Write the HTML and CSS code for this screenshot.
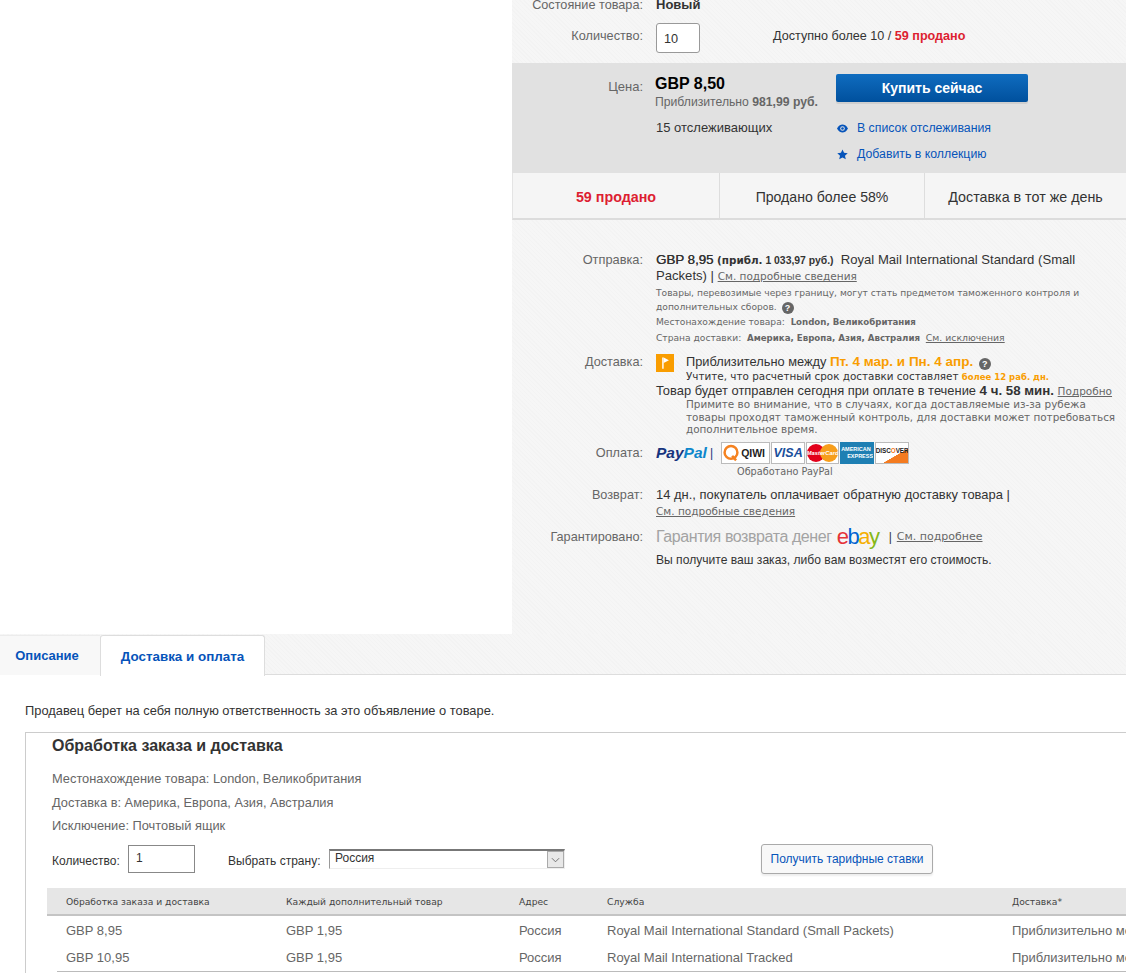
FILE: index.html
```html
<!DOCTYPE html>
<html lang="ru">
<head>
<meta charset="utf-8">
<title>Доставка и оплата</title>
<link rel="stylesheet" href="styles.css">
</head>
<body>
<div class="page">
  <section class="panel">
    <div class="row row-cond"><div class="lbl">Состояние товара:</div><div class="val strong">Новый</div></div>
    <div class="row row-qty">
      <div class="lbl">Количество:</div>
      <div class="qty-box">10</div>
      <div class="avail">Доступно более 10 / <b class="red">59 продано</b></div>
    </div>
    <div class="band">
      <div class="lbl band-lbl">Цена:</div>
      <div class="band-c1">
        <div class="price">GBP 8,50</div>
        <div class="approx">Приблизительно <b>981,99 руб.</b></div>
        <div class="watchers">15 отслеживающих</div>
      </div>
      <div class="band-c2">
        <div class="buy">Купить сейчас</div>
        <div class="act act-a">
          <svg class="act-i" viewBox="0 0 12 10"><path d="M0 5C2 1.6 4 .6 6 .6s4 1 6 4.400c-2 3.400-4 4.400-6 4.400S2 8.400 0 5z" fill="#0654ba"/><circle cx="6" cy="5" r="2.500" fill="#e1e1e1"/><circle cx="6" cy="5" r="1.400" fill="#0654ba"/></svg>
          <span class="link">В список отслеживания</span>
        </div>
        <div class="act act-b">
          <svg class="act-i" viewBox="0 0 12 12"><path d="M6 .5l1.700 3.700 4 .4-3 2.700.9 4L6 9.300 2.400 11.300l.9-4-3-2.700 4-.4z" fill="#0654ba"/></svg>
          <span class="link">Добавить в коллекцию</span>
        </div>
      </div>
    </div>
    <div class="stats">
      <div class="stat stat-1"><b class="red">59 продано</b></div>
      <div class="stat stat-2">Продано более 58%</div>
      <div class="stat stat-3">Доставка в тот же день</div>
    </div>

    <div class="row row-ship">
      <div class="lbl">Отправка:</div>
      <div class="val">
        <div class="ship-main"><b class="semi">GBP 8,95</b> <b class="ship-rub"><span class="v">(прибл.</span> 1 033,97 руб.)</b>&nbsp; Royal Mail International Standard (Small Packets) | <span class="small-link">См. подробные сведения</span></div>
        <div class="note note-a">Товары, перевозимые через границу, могут стать предметом таможенного контроля и дополнительных сборов. <span class="q">?</span></div>
        <div class="note note-b">Местонахождение товара:&nbsp; <b>London, Великобритания</b></div>
        <div class="note note-c">Страна доставки:&nbsp; <b>Америка, Европа, Азия, Австралия</b> &nbsp;<span class="small-link">См. исключения</span></div>
      </div>
    </div>

    <div class="row row-deliv">
      <div class="lbl">Доставка:</div>
      <div class="val">
        <div class="deliv-top">
          <div class="flag"><svg viewBox="0 0 16 16" class="flag-i"><path d="M5.500 3h1.300v10H5.500z" fill="#fff"/><path d="M6.800 3.200L11.500 5.500 6.800 8z" fill="#fff"/></svg></div>
          <div class="deliv-txt">
            <div class="deliv-l1">Приблизительно между <b class="orange">Пт. 4 мар. и Пн. 4 апр.</b> <span class="q">?</span></div>
            <div class="deliv-l2">Учтите, что расчетный срок доставки составляет <b class="orange">более 12 раб. дн.</b></div>
          </div>
        </div>
        <div class="deliv-l3">Товар будет отправлен сегодня при оплате в течение <b>4 ч. 58 мин.</b> <span class="small-link">Подробно</span></div>
        <div class="deliv-l4">Примите во внимание, что в случаях, когда доставляемые из-за рубежа товары проходят таможенный контроль, для доставки может потребоваться дополнительное время.</div>
      </div>
    </div>

    <div class="row row-pay">
      <div class="lbl">Оплата:</div>
      <div class="val">
        <div class="pay-line">
          <span class="paypal"><span class="pp-a">Pay</span><span class="pp-b">Pal</span></span>
          <span class="pay-sep">|</span>
          <span class="cards">
            <span class="card card-qiwi"><svg class="qiwi-i" viewBox="0 0 16 16"><circle cx="8" cy="7.500" r="5.700" fill="none" stroke="#f58220" stroke-width="2.200"/><path d="M9 10.500l3.500 4" stroke="#f58220" stroke-width="2.200" fill="none"/></svg><span class="qiwi-t">QIWI</span></span>
            <span class="card card-visa">VISA</span>
            <span class="card card-mc"><span class="mc-r"></span><span class="mc-o"></span><span class="mc-t">MasterCard</span></span>
            <span class="card card-amex"><span>AMERICAN</span><span class="amex-2">EXPRESS</span></span>
            <span class="card card-disc"><span class="disc-t">DISC<i class="disc-o">O</i>VER</span></span>
          </span>
        </div>
        <div class="pay-cap">Обработано PayPal</div>
      </div>
    </div>

    <div class="row row-ret">
      <div class="lbl">Возврат:</div>
      <div class="val">
        <div class="ret-main">14 дн., покупатель оплачивает обратную доставку товара |</div>
        <div class="ret-link"><span class="small-link">См. подробные сведения</span></div>
      </div>
    </div>

    <div class="row row-guar">
      <div class="lbl">Гарантировано:</div>
      <div class="val">
        <div class="guar-line">
          <span class="guar-t">Гарантия возврата денег</span>
          <span class="ebay"><span class="e1">e</span><span class="e2">b</span><span class="e3">a</span><span class="e4">y</span></span>
          <span class="guar-sep">|</span>
          <span class="small-link guar-link">См. подробнее</span>
        </div>
        <div class="guar-note">Вы получите ваш заказ, либо вам возместят его стоимость.</div>
      </div>
    </div>
  </section>

  <nav class="tabs">
    <div class="tab tab-off">Описание</div>
    <div class="tab tab-on">Доставка и оплата</div>
  </nav>

  <section class="content">
    <p class="resp">Продавец берет на себя полную ответственность за это объявление о товаре.</p>
    <div class="box">
      <h2 class="box-h">Обработка заказа и доставка</h2>
      <div class="info i1">Местонахождение товара: London, Великобритания</div>
      <div class="info i2">Доставка в: Америка, Европа, Азия, Австралия</div>
      <div class="info i3">Исключение: Почтовый ящик</div>
      <div class="calc">
        <span class="calc-l">Количество:</span>
        <div class="calc-in">1</div>
        <span class="calc-l calc-l2">Выбрать страну:</span>
        <div class="sel"><span>Россия</span><span class="sel-b"><svg viewBox="0 0 10 6" class="sel-i"><path d="M1 1l4 4 4-4" fill="none" stroke="#666" stroke-width="1"/></svg></span></div>
        <div class="rates">Получить тарифные ставки</div>
      </div>
      <div class="tbl">
        <div class="tr th"><div>Обработка заказа и доставка</div><div>Каждый дополнительный товар</div><div>Адрес</div><div>Служба</div><div>Доставка*</div></div>
        <div class="tr td td-first"><div>GBP 8,95</div><div>GBP 1,95</div><div>Россия</div><div>Royal Mail International Standard (Small Packets)</div><div>Приблизительно между Пт. 4 мар. и Пн. 4 апр.</div></div>
        <div class="tr td td-last"><div>GBP 10,95</div><div>GBP 1,95</div><div>Россия</div><div>Royal Mail International Tracked</div><div>Приблизительно между Пт. 4 мар. и Пн. 4 апр.</div></div>
      </div>
    </div>
  </section>
</div>
</body>
</html>
```

FILE: styles.css
```css
* { box-sizing: border-box; }
html, body { margin: 0; padding: 0; height: 973px; overflow: hidden; background: #fff; }
body { font: 12px/14px "Liberation Sans", Arial, sans-serif; color: #333; }
.page { width: 1126px; height: 973px; overflow: hidden; }

.panel {
  margin-left: 512px;
  height: 634px;
  overflow: hidden;
  background-color: #f6f6f6;
  background-image: repeating-linear-gradient(45deg, rgba(0,0,0,.01) 0 1px, transparent 1px 3px);
}
.row { display: flex; align-items: flex-start; }
.lbl { width: 131px; flex: none; text-align: right; color: #666; font-size: 12.700px; }
.val { margin-left: 13px; flex: 1; min-width: 0; color: #333; }
.strong { font-weight: bold; font-size: 13px; }
.red { color: #dd1e31; }
.orange { color: #f99d00; font-weight: bold; }
.link { color: #0654ba; }
.small-link {
  font: 10.500px/1 "DejaVu Sans", Verdana, sans-serif;
  color: #666;
  text-decoration: underline;
}

.row-cond { margin-top: -2px; height: 14px; }
.row-qty { margin-top: 11px; height: 30px; align-items: flex-start; }
.row-qty .lbl { padding-top: 6px; }
.qty-box {
  margin-left: 13px;
  width: 44px; height: 30px;
  background: #fff;
  border: 1px solid #999;
  border-radius: 3px;
  padding: 8px 0 0 7px;
  color: #333;
  font-size: 12.700px;
}
.avail { margin-left: 73px; padding-top: 6px; color: #333; font-size: 12.600px; }

.band { margin-top: 10px; height: 110px; background: #e1e1e1; display: flex; }
.band-lbl { padding-top: 17px; font-size: 13px; }
.band-c1 { margin-left: 12px; width: 181px; padding-top: 12px; }
.price { font-size: 16px; line-height: 18px; font-weight: bold; color: #000; }
.approx { margin-top: 2px; color: #666; font-size: 12.200px; }
.watchers { margin-top: 12px; color: #333; margin-left: 1px; font-size: 13px; }
.band-c2 { padding-top: 11px; }
.buy {
  width: 192px; height: 28px;
  background: linear-gradient(#0f6cbf, #00509d);
  border-radius: 2px;
  box-shadow: 0 2px 0 rgba(0,0,0,.08);
  color: #fff;
  font-size: 14px; font-weight: bold; line-height: 28px;
  text-align: center;
}
.act { display: flex; align-items: center; height: 14px; font-size: 12.300px; }
.act-a { margin-top: 19px; }
.act-b { margin-top: 12px; }
.act-i { width: 11px; height: 11px; margin-left: 1px; margin-right: 9px; flex: none; }

.stats {
  height: 47px;
  display: flex;
  background: #f5f5f5;
  border-bottom: 2px solid #dcdcdc;
  border-left: 1px solid #e4e4e4;
  font-size: 14.300px;
  line-height: 48px;
  color: #333;
}
.stat { text-align: center; border-right: 1px solid #ddd; }
.stat-1 { width: 207px; }
.stat-2 { width: 205px; font-size: 14.100px; }
.stat-3 { flex: 1; border-right: 0; }

.row-ship { margin-top: 32px; }
.row-ship .lbl { padding-top: 1px; font-size: 12.800px; }
.ship-main { width: 430px; line-height: 16px; font-size: 13.100px; }
.semi { font-weight: normal; font-size: 13.300px; text-shadow: .3px 0 0 #333; }
.ship-rub { font-size: 10.400px; font-weight: bold; line-height: 1; }
.ship-rub .v { font-family: "DejaVu Sans", Verdana, sans-serif; }
.note { font: 9.150px/15px "DejaVu Sans", Verdana, sans-serif; color: #666; }
.note b { font-size: 8.650px; }
.note .small-link { font-size: 9.300px; }
.note-a { width: 440px; margin-top: 2px; line-height: 14px; }
.note-b { margin-top: 1px; }
.note-c { margin-top: 1px; }
.q {
  display: inline-block; vertical-align: -1px;
  width: 12px; height: 12px; border-radius: 50%;
  background: #666; color: #fff;
  font: bold 9px/12px "Liberation Sans", sans-serif;
  text-align: center; margin-left: 2px;
}

.row-deliv { margin-top: 8px; }
.row-deliv .lbl { padding-top: 1px; }
.deliv-top { display: flex; margin-left: 0; }
.flag { width: 18px; height: 18px; background: #f99d00; flex: none; display: flex; }
.flag-i { width: 18px; height: 18px; }
.deliv-txt { margin-left: 12px; }
.deliv-l1 { line-height: 16px; font-size: 12.800px; }
.deliv-l1 .orange { font-size: 13.500px; }
.deliv-l2 { font: 10.400px/12px "DejaVu Sans", Verdana, sans-serif; color: #333; white-space: nowrap; }
.deliv-l2 .orange { font-size: 8.500px; }
.deliv-l3 { line-height: 14px; margin-top: 1px; white-space: nowrap; font-size: 12.900px; }
.deliv-l3 b { font-size: 13.300px; }
.deliv-l4 {
  font: 10.420px/12.500px "DejaVu Sans", Verdana, sans-serif;
  color: #666;
  margin-left: 30px;
  width: 440px;
}

.row-pay { margin-top: 6px; }
.row-pay .lbl { padding-top: 4px; }
.pay-line { display: flex; align-items: center; height: 22px; }
.paypal { font: italic bold 15.500px/22px "Liberation Sans", sans-serif; width: 53px; }
.pp-a { color: #16347e; }
.pp-b { color: #0d87cc; }
.pay-sep { margin-left: 1px; color: #16347e; }
.cards { display: flex; margin-left: 8px; gap: 1px; }
.card {
  height: 22px;
  border: 1px solid #bbb;
  background: #fff;
  display: flex;
  align-items: center;
  justify-content: center;
  position: relative;
  overflow: hidden;
  flex: none;
}
.card-qiwi { width: 49px; justify-content: flex-start; }
.qiwi-i { width: 18px; height: 18px; flex: none; }
.qiwi-t { font: bold 10.500px/14px "Liberation Sans", sans-serif; color: #222; margin-left: 1px; }
.card-visa { width: 34px; font: italic bold 12.500px/20px "Liberation Sans", sans-serif; color: #1a4f9c; }
.card-mc { width: 33px; }
.mc-r, .mc-o { position: absolute; top: 1px; width: 18px; height: 18px; border-radius: 50%; }
.mc-r { left: 0; background: #e2001a; }
.mc-o { left: 13px; background: #f79e1b; }
.mc-t { position: relative; color: #fff; font: italic bold 5.800px/20px "Liberation Sans", sans-serif; white-space: nowrap; }
.card-amex {
  width: 34px;
  background: #1e7fb3;
  border-color: #1e7fb3;
  flex-direction: column;
  color: #fff;
  font: bold 5.500px/7px "Liberation Sans", sans-serif;
  align-items: flex-start;
}
.amex-2 { margin-left: 6px; }
.card-disc { width: 34px; align-items: flex-start; background: linear-gradient(150deg, #fff 62%, #f47b20 63%); }
.disc-t { font: bold 6.300px/16px "Liberation Sans", sans-serif; color: #222; }
.disc-o { font-style: normal; color: #f47b20; }
.pay-cap { font: 9.700px/13px "DejaVu Sans", Verdana, sans-serif; color: #666; margin: 1px 0 0 81px; }

.row-ret { margin-top: 10px; }
.ret-main { font-size: 12.950px; }
.ret-link { margin-top: 2px; }

.row-guar { margin-top: 9px; }
.row-guar .lbl { padding-top: 3px; }
.guar-line { display: flex; align-items: center; height: 20px; }
.guar-t { font-size: 16px; color: #a3a3a3; line-height: 20px; letter-spacing: -.42px; }
.ebay { font: 22px/20px "Liberation Sans", sans-serif; letter-spacing: -1.500px; margin-left: 5px; width: 52px; }
.e1 { color: #e53238; }
.e2 { color: #0064d2; }
.e3 { color: #f5af02; }
.e4 { color: #86b817; }
.guar-sep { color: #333; margin: 0 5px 0 0; }
.guar-link { font-size: 11px; }
.guar-note { margin-top: 6px; color: #333; font-size: 12.100px; }

.tabs {
  height: 41px;
  display: flex;
  align-items: flex-start;
  background-color: #f6f6f6;
  background-image: repeating-linear-gradient(45deg, rgba(0,0,0,.01) 0 1px, transparent 1px 3px);
  border-bottom: 1px solid #ddd;
  position: relative;
}
.tab {
  height: 41px;
  font-size: 13px;
  font-weight: bold;
  line-height: 41px;
  color: #0654ba;
  text-align: center;
  margin-top: 1px;
}
.tab-off { width: 100px; padding-right: 6px; background: #f8f8f8; border-top: 1px solid #ececec; height: 40px; line-height: 40px; }
.tab-on { width: 165px; background: #fff; border: 1px solid #ddd; border-bottom: 0; border-radius: 3px 3px 0 0; font-size: 13.400px; }

.content { padding-left: 25px; }
.resp { margin: 29px 0 0; line-height: 14px; color: #333; font-size: 12.870px; }
.box { margin-top: 14px; width: 1300px; height: 400px; border: 1px solid #ccc; padding-left: 26px; }
.box-h { margin: 4px 0 0; font-size: 16px; line-height: 18px; font-weight: bold; color: #333; }
.info { color: #666; line-height: 14px; font-size: 12.830px; }
.i1 { margin-top: 17px; }
.i2 { margin-top: 10px; }
.i3 { margin-top: 9px; }
.calc { display: flex; align-items: flex-start; margin-top: 11px; height: 44px; }
.calc-l { padding-top: 10px; color: #333; width: 76px; flex: none; }
.calc-l2 { margin-left: 33px; width: 101px; padding-top: 10px; }
.calc-in { width: 67px; height: 28px; border: 1px solid #888; flex: none; padding: 5px 0 0 7px; color: #333; margin-top: 1px; }
.sel {
  width: 236px; height: 20px;
  margin-top: 5px;
  display: flex; justify-content: space-between;
  border-top: 2px solid #777;
  border-left: 1px solid #999;
  border-right: 1px solid #eee;
  border-bottom: 1px solid #eee;
  padding-left: 5px;
  background: #fff;
  line-height: 14px;
  color: #333;
}
.sel-b { width: 17px; height: 17px; background: #e8e8e8; border: 1px solid #aaa; display: flex; align-items: center; justify-content: center; }
.sel-i { width: 9px; height: 6px; }
.rates {
  margin-left: 196px;
  width: 172px; height: 30px;
  border: 1px solid #aaa; border-radius: 3px;
  background: #f8f8f8;
  box-shadow: 0 2px 2px #eee;
  color: #0654ba;
  text-align: center;
  line-height: 28px;
}
.tbl { margin-left: -5px; }
.tr { display: grid; grid-template-columns: 220px 233px 88px 405px 400px; padding-left: 19px; white-space: nowrap; }
.th {
  height: 28px;
  background: #e6e6e6;
  border-bottom: 2px solid #c4c4c4;
  font: 9.200px/27px "DejaVu Sans", Verdana, sans-serif;
  color: #444;
}
.td { height: 27px; line-height: 27px; color: #666; font-size: 13px; }
.td-first { height: 28px; padding-top: 1px; }
.td-last { margin-left: 10px; padding-left: 9px; height: 28px; border-bottom: 1px solid #bbb; }
```
